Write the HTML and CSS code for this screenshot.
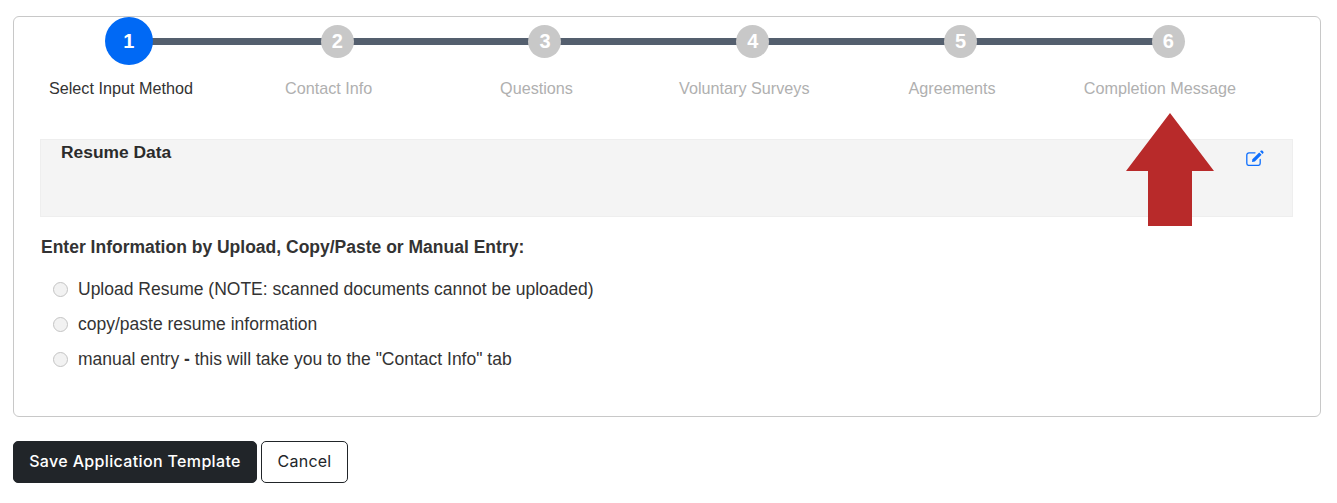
FILE: index.html
```html
<!DOCTYPE html>
<html lang="en">
<head>
    <meta charset="UTF-8">
    <meta name="viewport" content="width=device-width, initial-scale=1.0">
    <title>Application Template</title>
    <link rel="stylesheet" href="styles.css">
</head>
<body>
    <div class="card">
        <ul class="stepper">
            <li class="step active"><span class="step-num">1</span><span class="step-label">Select Input Method</span></li>
            <li class="step"><span class="step-num">2</span><span class="step-label">Contact Info</span></li>
            <li class="step"><span class="step-num">3</span><span class="step-label">Questions</span></li>
            <li class="step"><span class="step-num">4</span><span class="step-label">Voluntary Surveys</span></li>
            <li class="step"><span class="step-num">5</span><span class="step-label">Agreements</span></li>
            <li class="step"><span class="step-num">6</span><span class="step-label">Completion Message</span></li>
        </ul>

        <div class="resume-panel">
            <h2>Resume Data</h2>
            <a href="#" class="edit-link" aria-label="Edit">
                <svg viewBox="0 0 18 16" width="18" height="16" fill="none">
                    <path d="M9 2.8H3A2.2 2.2 0 0 0 .8 5v8.2A2.2 2.2 0 0 0 3 15.4h9a2.2 2.2 0 0 0 2.2-2.2V9.5" stroke="#0d6efd" stroke-width="1.3" stroke-linecap="round"/>
                    <path d="M6.4 9.2 13.2 2.4l2.4 2.4L8.8 11.6 6 12Z" fill="#0d6efd"/>
                    <path d="M14.1 1.5 15 .6c.4-.3.9-.3 1.2 0l1.2 1.2c.3.3.3.9 0 1.2l-.9.9Z" fill="#0d6efd"/>
                </svg>
            </a>
        </div>

        <h3 class="method-title">Enter Information by Upload, Copy/Paste or Manual Entry:</h3>
        <label class="radio-row"><input type="radio" name="method"><span>Upload Resume (NOTE: scanned documents cannot be uploaded)</span></label>
        <label class="radio-row"><input type="radio" name="method"><span>copy/paste resume information</span></label>
        <label class="radio-row"><input type="radio" name="method"><span>manual entry <b>-</b> this will take you to the "Contact Info" tab</span></label>

        <svg class="arrow" viewBox="0 0 88 113" width="88" height="113">
            <path d="M44 0 88 58H66V113H22V58H0Z" fill="#b82a2a"/>
        </svg>
    </div>

    <div class="actions">
        <button class="btn btn-dark">Save Application Template</button>
        <button class="btn btn-light">Cancel</button>
    </div>
</body>
</html>
```

FILE: styles.css
```css
* { box-sizing: border-box; }
body { margin: 0; padding: 16px 16px 20px 13px; font-family: "Liberation Sans", Arial, sans-serif; font-size: 17.5px; color: #333; background: #fff; }

.card { position: relative; height: 401px; border: 1px solid #c8c8c8; border-radius: 6px; padding: 0 27px 0 26px; }

.stepper { display: grid; grid-template-columns: repeat(6, 207.8px); list-style: none; margin: 0 0 0 -23px; padding: 0; }
.step { position: relative; display: flex; flex-direction: column; align-items: center; }
.step:not(:last-child)::after { content: ""; position: absolute; top: 21px; left: calc(50% + 8px); width: 100%; height: 7px; background: #545f6e; }
.step-num { position: relative; z-index: 1; display: flex; align-items: center; justify-content: center; width: 33px; height: 33px; margin: 8px 0 7px 17px; border-radius: 50%; background: #c8c8c8; color: #fff; font-size: 20px; font-weight: bold; }
.step.active .step-num { width: 48px; height: 48px; margin: 0 0 0 16px; background: #0069f5; }
.step-label { margin-top: 14px; color: #b0b0b0; font-size: 16.2px; line-height: 18px; white-space: nowrap; }
.step.active .step-label { color: #333; }

.resume-panel { display: flex; justify-content: space-between; height: 78px; margin-top: 42px; padding: 3px 28px 0 20px; background: #f4f4f4; border: 1px solid #eee; }
.resume-panel h2 { margin: 0; font-size: 17.4px; line-height: 18px; font-weight: bold; color: #2b2b2b; }
.edit-link { display: block; margin-top: 7px; height: 16px; }

.method-title { margin: 21px 0 16px 1px; font-size: 17.5px; line-height: 18px; font-weight: bold; }
.radio-row { display: flex; align-items: center; height: 35px; padding-left: 13px; }
.radio-row input { appearance: none; width: 15px; height: 15px; margin: 0 10px 0 0; border: 1px solid #c4c4c4; border-radius: 50%; background: #f2f2f2; }

.arrow { position: absolute; top: 96px; left: 1112px; }

.actions { display: flex; gap: 4px; margin-top: 24px; }
.btn { height: 42px; padding: 0 0 2px; border-radius: 5px; font-family: "Inter", sans-serif; font-size: 16px; letter-spacing: .35px; cursor: pointer; }
.btn-dark { width: 244px; background: #212529; border: 1px solid #212529; color: #fff; font-weight: 500; }
.btn-light { width: 87px; background: #fff; border: 1px solid #212529; color: #212529; letter-spacing: .25px; }
```
